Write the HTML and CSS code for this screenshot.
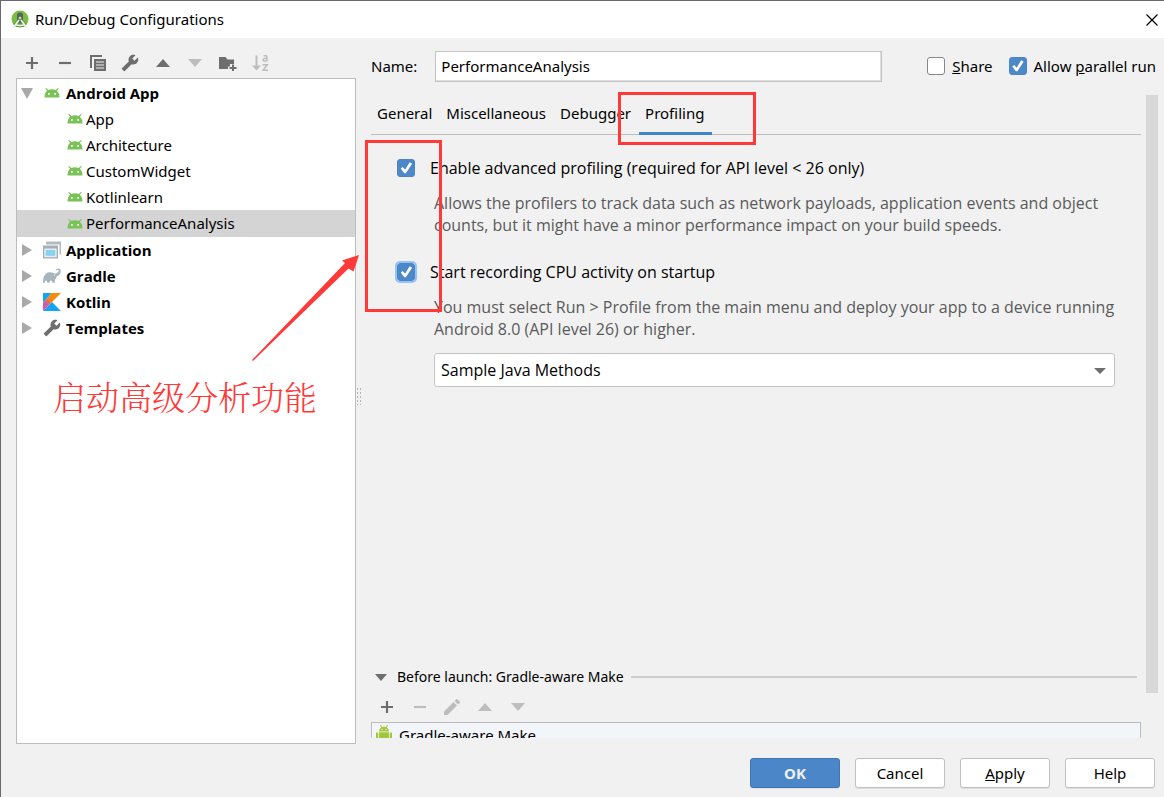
FILE: index.html
```html
<!DOCTYPE html>
<html lang="en">
<head>
<meta charset="utf-8">
<title>Run/Debug Configurations</title>
<link rel="stylesheet" href="styles.css">
</head>
<body>
<svg class="defs" aria-hidden="true">
  <defs>
    <linearGradient id="kotlin-gradient" x1="0" y1="1" x2="1" y2="0">
      <stop offset="0" stop-color="#c757bc"/><stop offset=".3" stop-color="#d0609a"/><stop offset=".55" stop-color="#f88909"/><stop offset="1" stop-color="#f88909"/>
    </linearGradient>
    <symbol id="plus" viewBox="0 0 16 16"><path d="M6.900 2h2.200v4.900H14v2.200H9.100V14H6.900V9.100H2V6.900h4.900z"/></symbol>
    <symbol id="minus" viewBox="0 0 16 16"><path d="M2 6.900h12v2.200H2z"/></symbol>
    <symbol id="up" viewBox="0 0 16 16"><path d="M1 12 8 4l7 8z"/></symbol>
    <symbol id="down" viewBox="0 0 16 16"><path d="M1 4h14l-7 8z"/></symbol>
    <symbol id="wrench" viewBox="0 0 24 24"><path transform="translate(24 0) scale(-1 1)" d="M22.700 19l-9.100-9.100c.9-2.300.4-5-1.500-6.900-2-2-5-2.400-7.400-1.300L9 6 6 9 1.600 4.700C.4 7.100.9 10.100 2.900 12.100c1.900 1.900 4.600 2.400 6.900 1.500l9.100 9.100c.4.4 1 .4 1.400 0l2.300-2.300c.5-.4.5-1.100.1-1.400z"/></symbol>
    <symbol id="android" viewBox="0 0 16 10"><path fill="#78c257" d="M1.200.6 2 0l2.300 2.100Q6 1.300 8 1.300t3.700.8L14 0l.8.6-1.900 2.200Q15.500 5 15.500 9.500H.5Q.5 5 3.100 2.800z"/><path fill="#fff" d="M4 5h1.700v1.700H4zM10.300 5H12v1.700h-1.700z"/></symbol>
  </defs>
</svg>

<div class="window">
  <header class="titlebar">
    <svg class="logo" viewBox="0 0 20 20" aria-hidden="true"><circle cx="10" cy="9" r="8.500" fill="#79bd45"/><path d="M3 14 10 7l7 7-3 3H6z" fill="#5d9e3c"/><path d="M7 5.500a3 3 0 0 1 6 0v5l-3 3-3-3z" fill="#57635b"/><circle cx="10" cy="8" r="1.500" fill="#b6d99d"/><path d="m9 10-6 8M11 10l6 8M5 14.500q5 2 10 0" fill="none" stroke="#eef1ec" stroke-width="1.700"/></svg>
    <h1>Run/Debug Configurations</h1>
    <button class="close" aria-label="Close"><svg viewBox="0 0 12 12"><path d="m.5.5 11 11m0-11-11 11" stroke="#000" stroke-width="1.200"/></svg></button>
  </header>

  <main class="main">
    <aside class="sidebar">
      <div class="toolbar">
        <button aria-label="Add"><svg><use href="#plus"/></svg></button>
        <button aria-label="Remove"><svg><use href="#minus"/></svg></button>
        <button aria-label="Copy"><svg viewBox="0 0 16 16"><path d="M0 0h12v2H2v11H0z"/><path fill-rule="evenodd" d="M4 4h12v12H4zm2 2.500v1h8v-1zm0 3v1h8v-1zm0 3v1h8v-1z"/></svg></button>
        <button aria-label="Edit templates"><svg class="tool"><use href="#wrench"/></svg></button>
        <button aria-label="Move up"><svg><use href="#up"/></svg></button>
        <button aria-label="Move down" disabled><svg><use href="#down"/></svg></button>
        <button aria-label="New folder"><svg class="folder" viewBox="0 0 18 16"><path d="M0 2h6.500l2 2.500H15V9h-4v2.500H9V14H0z"/><path d="M13 9.500h2V12h2.500v2H15v2h-2v-2h-2.500v-2H13z"/></svg></button>
        <button aria-label="Sort" disabled><svg class="sort" viewBox="0 0 17 18"><path d="M3.500 1.500h2v10H9L4.500 16.500 0 11.500h3.500z"/><path fill="none" stroke="currentColor" stroke-width="1.500" d="M11.500 2Q15 .8 15 3.500V7.500M15 4.500Q11 4 11 6t4 .5M10.500 10.700h4.800L11 16.300h5"/></svg></button>
      </div>
      <ul class="tree">
        <li class="row group"><svg class="twist" viewBox="0 0 12 12"><path d="M0 1h12L6 12z"/></svg><svg class="android"><use href="#android"/></svg><span>Android App</span></li>
        <li class="row child"><svg class="android"><use href="#android"/></svg><span>App</span></li>
        <li class="row child"><svg class="android"><use href="#android"/></svg><span>Architecture</span></li>
        <li class="row child"><svg class="android"><use href="#android"/></svg><span>CustomWidget</span></li>
        <li class="row child"><svg class="android"><use href="#android"/></svg><span>Kotlinlearn</span></li>
        <li class="row child selected"><svg class="android"><use href="#android"/></svg><span>PerformanceAnalysis</span></li>
        <li class="row group"><svg class="twist" viewBox="0 0 12 12"><path d="M1 0v12l10-6z"/></svg><svg class="kind" viewBox="0 0 18 17"><path fill="#b1bbc1" d="M3 0h15v13h-1.500V3H3z"/><path fill="#a3afb6" d="M0 4h15v13H0z"/><path fill="#e8edef" d="M1.300 7h12.400v8.700H1.300z"/><path fill="#87d2ee" d="M2.800 8.500h9.400v5.800H2.800z"/></svg><span>Application</span></li>
        <li class="row group"><svg class="twist" viewBox="0 0 12 12"><path d="M1 0v12l10-6z"/></svg><svg class="kind" viewBox="0 0 19 16"><path fill="#a9b5bd" d="M0 15Q-.3 8.500 3 5.500 6 3.400 9.500 4.300l2.500.9q2 .6 3.200-.8Q17.300 3 16.500 1.900q-.9-.9-2 .1L13 2.200Q13.800 0 16 0q3 .2 2.800 3.300Q18 7.500 14.500 8.300L14 10q-1 1.200-1.400 2.300L12.300 15H10q-.1-2.300-1.500-2.300T7 15H4.500q-.1-2.300-1.300-2.300T2 15z"/><circle cx="12" cy="6.800" r=".7" fill="#fff"/></svg><span>Gradle</span></li>
        <li class="row group"><svg class="twist" viewBox="0 0 12 12"><path d="M1 0v12l10-6z"/></svg><svg class="kind" viewBox="0 0 18 18"><path fill="#14a4f4" d="M0 0h9L0 9.500zM0 18l9-9 9 9z"/><path fill="url(#kotlin-gradient)" d="M9 0h9L0 18V9.500z"/></svg><span>Kotlin</span></li>
        <li class="row group"><svg class="twist" viewBox="0 0 12 12"><path d="M1 0v12l10-6z"/></svg><svg class="kind dark"><use href="#wrench"/></svg><span>Templates</span></li>
      </ul>
    </aside>
    <div class="splitter" aria-hidden="true"></div>

    <section class="editor">
      <div class="name-row">
        <label for="name">Name:</label>
        <input class="name" id="name" type="text" value="PerformanceAnalysis">
        <label class="option"><input class="tick" type="checkbox"><span><u>S</u>hare</span></label>
        <label class="option"><input class="tick" type="checkbox" checked><span>Allow <u>p</u>arallel run</span></label>
      </div>

      <div class="scroller">
        <div class="content">
          <nav class="tabs">
            <button>General</button>
            <button>Miscellaneous</button>
            <button>Debugger</button>
            <button class="active">Profiling</button>
          </nav>
          <div class="profiling">
            <label class="setting"><input class="tick" type="checkbox" checked><span>Enable advanced profiling (required for API level &lt; 26 only)</span></label>
            <p>Allows the profilers to track data such as network payloads, application events and object<br>counts, but it might have a minor performance impact on your build speeds.</p>
            <label class="setting"><input class="tick focused" type="checkbox" checked><span>Start recording CPU activity on startup</span></label>
            <p>You must select Run &gt; Profile from the main menu and deploy your app to a device running<br>Android 8.0 (API level 26) or higher.</p>
            <div class="method">
              <select aria-label="CPU recording method"><option>Sample Java Methods</option></select>
              <svg viewBox="0 0 12 6"><path d="M0 0h12L6 6z"/></svg>
            </div>
          </div>
          <section class="before">
            <h2><svg viewBox="0 0 12 7"><path d="M0 0h12L6 7z"/></svg><span>Before launch: Gradle-aware Make</span></h2>
            <div class="toolbar small">
              <button aria-label="Add task"><svg><use href="#plus"/></svg></button>
              <button aria-label="Remove task" disabled><svg><use href="#minus"/></svg></button>
              <button aria-label="Edit task" disabled><svg viewBox="0 0 16 16"><path d="M0 12.500 9.500 3 13 6.500 3.500 16H0zM10.500 2l1.600-1.600q.8-.7 1.600 0l1.900 1.900q.7.8 0 1.600L14 5.500z"/></svg></button>
              <button aria-label="Move task up" disabled><svg><use href="#up"/></svg></button>
              <button aria-label="Move task down" disabled><svg><use href="#down"/></svg></button>
            </div>
            <div class="tasks">
              <div class="task"><svg viewBox="0 0 16 20"><path fill="#a4c639" d="M3 6.500Q3.200 3.500 5.200 2.400L4 .5l.7-.4L6 2q2-.7 4 0L11.300.1l.7.4-1.200 1.900Q12.800 3.500 13 6.500zM3 7.300h10V16H3zM0 8q1-1.500 2.200 0v6Q1 15.500 0 14zM13.800 8q1-1.500 2.200 0v6q-1 1.500-2.200 0zM4.500 16h2.300v4H4.500zM9.200 16h2.300v4H9.200z"/><path fill="#fff" d="M5.500 4h1v1h-1zM9.500 4h1v1h-1z"/></svg><span>Gradle-aware Make</span></div>
            </div>
          </section>
        </div>
        <div class="scrollbar"><div class="thumb"></div></div>
      </div>
    </section>
  </main>

  <footer class="footer">
    <button class="primary">OK</button>
    <button>Cancel</button>
    <button><u>A</u>pply</button>
    <button>Help</button>
  </footer>

  <div class="mark mark-tab"></div>
  <div class="mark mark-checks"></div>
  <svg class="arrow" viewBox="0 0 108 108" aria-hidden="true"><path d="M107 1 90 6.500l3 2.500L0 106l1 1L96.500 14.500l5 3z"/></svg>
  <div class="note" lang="zh">启动高级分析功能</div>
</div>
</body>
</html>
```
FILE: styles.css
```css
* { box-sizing: border-box; }

body {
  margin: 0;
  font: 15px/22px "Noto Sans", "Open Sans", sans-serif;
  color: #000;
  background: #f1f1f1;
}

button, input, select { font: inherit; color: inherit; margin: 0; }
button { border: 0; padding: 0; background: none; }
h1, h2, p, ul { margin: 0; padding: 0; font: inherit; }
svg { display: block; flex: none; fill: currentColor; }
.defs { position: absolute; width: 0; height: 0; }

.window {
  position: relative;
  display: flex;
  flex-direction: column;
  min-height: 100vh;
  border: 1px solid #69696b;
  border-width: 1px 0 0 1px;
}

.titlebar {
  display: flex;
  align-items: center;
  height: 37px;
  padding: 0 6px 0 9px;
  background: #fff;
}
.logo { width: 20px; height: 20px; }
.titlebar h1 { flex: 1; margin-left: 5px; padding-bottom: 2px; }
.close svg { width: 12px; height: 12px; }

.main { flex: 1; display: flex; padding: 0 6px 0 15px; }

.sidebar { display: flex; flex-direction: column; flex: 0 0 340px; }
.toolbar {
  display: grid;
  grid-template-columns: repeat(8, 1fr);
  place-items: center;
  width: 261px;
  height: 40px;
  padding-top: 9px;
  color: #6e6e6e;
}
.toolbar button:disabled { color: #bdbdbd; }
.toolbar svg { width: 16px; height: 16px; }
.toolbar .tool { width: 18px; height: 18px; }
.toolbar .folder { width: 18px; }
.toolbar .sort { width: 17px; height: 18px; }
.toolbar.small {
  grid-template-columns: repeat(5, 1fr);
  width: 163px;
  height: 30px;
  padding: 0;
}

.tree {
  flex: 1;
  padding-top: 1px;
  list-style: none;
  border: 1px solid #bdbdbd;
  background: #fff;
}
.row { display: flex; align-items: center; height: 26px; }
.row span { padding-bottom: 1px; }
.group { padding-left: 4px; font-family: "Open Sans", "Noto Sans", sans-serif; font-weight: 700; }
.child { padding-left: 50px; }
.selected { height: 27px; background: #d4d4d4; }
.twist { width: 12px; height: 12px; color: #a9a9a9; }
.android { width: 16px; height: 10px; }
.kind { width: 18px; height: 18px; }
.dark { color: #6e6e6e; }
.group .android { margin-left: 11px; margin-right: 6px; }
.group .kind { margin-left: 10px; margin-right: 5px; }
.child .android { margin-right: 3px; }

.splitter {
  align-self: flex-end;
  width: 6px;
  height: 18px;
  margin: 0 9px 339px 0;
  background: radial-gradient(circle, #b4b4b4 1px, transparent 1px) 0 0 / 3px 4px;
}

.editor { flex: 1; min-width: 0; display: flex; flex-direction: column; padding: 13px 0 6px; }
.name-row { display: flex; align-items: center; height: 31px; padding-right: 2px; }
.name-row label { padding-bottom: 1px; }
.name {
  flex: 1;
  min-width: 0;
  height: 31px;
  margin: 0 29px 0 18px;
  padding: 0 5px 2px;
  border: 1px solid #c4c4c4;
  box-shadow: inset -1px -1px #dedede;
  background: #fff;
}
.option { display: flex; align-items: center; gap: 7px; margin-left: 16px; }

.tick {
  appearance: none;
  flex: none;
  width: 18px;
  height: 18px;
  border: 1px solid #878787;
  border-radius: 3px;
  background: #fff;
}
.tick:checked { border-color: #4a86c7; background: #4d89c9; }
.tick:checked::before {
  content: "";
  display: block;
  width: 16px;
  height: 16px;
  background: #fff;
  clip-path: polygon(17% 53%, 30% 43%, 44% 61%, 73% 14%, 88% 24%, 49% 83%, 40% 83%);
}
.focused { outline: 2px solid #97c3f3; }

.scroller { flex: 1; display: flex; margin-top: 13px; }
.content { flex: 1; min-width: 0; display: flex; flex-direction: column; }
.scrollbar { width: 12px; margin-left: 5px; }
.thumb { height: 93%; background: #d8d8d8; }

.tabs { display: flex; height: 40px; border-bottom: 1px solid #bdbdbd; }
.tabs button { height: 40px; padding: 0 8px 2px 6px; border-bottom: 3px solid transparent; }
.tabs .active { border-color: #4083c9; }

.profiling {
  padding: 22px 26px 0;
  font-family: "Open Sans", "Noto Sans", sans-serif;
  font-size: 16px;
}
.setting { display: flex; align-items: center; gap: 15px; }
.profiling p { margin: 13px 0 25px 37px; color: #5a5a5a; white-space: nowrap; }
.method { position: relative; margin: -12px 0 0 37px; }
.method select {
  appearance: none;
  display: block;
  width: 100%;
  height: 34px;
  padding: 0 6px;
  border: 1px solid #c4c4c4;
  border-radius: 3px;
  background: #fff;
}
.method svg { position: absolute; right: 9px; top: 15px; width: 12px; height: 6px; color: #6e6e6e; }

.before { margin-top: auto; }
.before h2 { display: flex; align-items: center; height: 24px; margin: 0 4px 3px; font-size: 14px; }
.before h2 svg { width: 12px; height: 7px; margin-right: 10px; color: #6e6e6e; }
.before h2::after { content: ""; flex: 1; height: 2px; margin-left: 7px; background: #cdcdcd; }
.tasks {
  height: 16px;
  overflow: hidden;
  border: 1px solid #bdbdbd;
  border-bottom: 0;
  background: #f2f5fa;
}
.task { display: flex; align-items: center; gap: 7px; height: 24px; padding-left: 4px; }
.task svg { width: 16px; height: 20px; }

.footer { display: flex; justify-content: flex-end; gap: 15px; padding: 14px 9px 9px; }
.footer button {
  width: 90px;
  height: 30px;
  border: 1px solid #c0c0c0;
  border-radius: 3px;
  background: #fff;
  box-shadow: 0 1px #dedede;
}
.footer .primary { border-color: #3d75b8; background: #4a86c8; color: #f0f0f0; font-weight: 700; }

.mark { position: absolute; border: 3px solid #ff3838; }
.mark-tab { left: 617px; top: 91px; width: 138px; height: 53px; }
.mark-checks { left: 364px; top: 139px; width: 77px; height: 172px; }
.arrow { position: absolute; left: 251px; top: 253px; width: 108px; height: 108px; color: #ff3838; }
.note {
  position: absolute;
  left: 52px;
  top: 375px;
  font: 300 33px/40px "Noto Serif CJK SC", "Noto Sans CJK SC", serif;
  color: #ff3838;
}
```
